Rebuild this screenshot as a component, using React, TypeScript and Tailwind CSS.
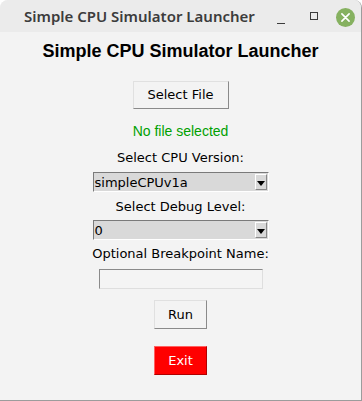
import React from "react";

const dv = { fontFamily: '"DejaVu Sans", sans-serif' } as const;
const ar = { fontFamily: '"Liberation Sans", Arial, sans-serif' } as const;

function Combo({ value }: { value: string }) {
  return (
    <div className="flex h-[20px] w-[176px] items-stretch border-t border-l border-[#7a7a7a] border-b border-b-[#ffffff] border-r border-r-[#ffffff] bg-[#d9d9d9]">
      <div className="flex flex-1 items-center pl-[1px] text-[13px] leading-none text-black" style={dv}>
        {value}
      </div>
      <div className="m-[1px] flex w-[12px] items-end justify-center border-t border-l border-t-white border-l-white border-b border-r border-b-[#888] border-r-[#888] bg-[#d9d9d9] pb-[3px]">
        <svg width="8" height="5" viewBox="0 0 8 5">
          <polygon points="0,0 8,0 4,5" fill="#000" />
        </svg>
      </div>
    </div>
  );
}

function Btn({ children, className = "" }: { children: React.ReactNode; className?: string }) {
  return (
    <div
      className={`flex items-center justify-center border border-t-[#e0e0e0] border-l-[#e0e0e0] border-b-[#8a8a8a] border-r-[#8a8a8a] text-[13px] text-[#000] ${className}`}
      style={dv}
    >
      {children}
    </div>
  );
}

export default function App() {
  return (
    <div className="h-[401px] w-[362px] bg-white">
      <div className="flex h-[401px] w-[362px] flex-col overflow-hidden rounded-t-[8px] border-r border-b border-[#9c9c9c] bg-[#f3f3f3]">
        <div className="relative flex h-[32px] shrink-0 items-center bg-[#ebebeb]">
          <div className="pl-[24px] text-[15px] font-semibold text-[#3c3c3c]" style={{ fontFamily: '"Noto Sans", sans-serif' }}>
            Simple CPU Simulator Launcher
          </div>
          <div className="absolute left-[277px] top-[23px] h-[1px] w-[8px] bg-[#3c3c3c]" />
          <div className="absolute left-[310px] top-[12px] h-[8px] w-[8px] border border-[#3c3c3c]" />
          <div className="absolute left-[336px] top-[8px] flex h-[19px] w-[19px] items-center justify-center rounded-full bg-[#86b160]">
            <svg width="9" height="9" viewBox="0 0 10 10">
              <path d="M1 1 L9 9 M9 1 L1 9" stroke="#fff" strokeWidth="1.8" strokeLinecap="round" />
            </svg>
          </div>
        </div>
        <div className="flex flex-col items-center">
          <div className="mt-[8px] h-[22px] text-[18px] font-bold leading-[22px] text-[#000]" style={ar}>
            Simple CPU Simulator Launcher
          </div>
          <Btn className="mt-[19px] h-[28px] w-[96px]">Select File</Btn>
          <div className="mt-[13px] h-[18px] text-[14px] leading-[18px] text-[#00a000]" style={ar}>
            No file selected
          </div>
          <div className="mt-[9px] h-[18px] text-[13px] leading-[18px] text-[#000]" style={dv}>
            Select CPU Version:
          </div>
          <div className="mt-[5px]">
            <Combo value="simpleCPUv1a" />
          </div>
          <div className="mt-[6px] h-[18px] text-[13px] leading-[18px] text-[#000]" style={dv}>
            Select Debug Level:
          </div>
          <div className="mt-[4px]">
            <Combo value="0" />
          </div>
          <div className="mt-[5px] h-[18px] text-[13px] leading-[18px] text-[#000]" style={dv}>
            Optional Breakpoint Name:
          </div>
          <div className="mt-[6px] h-[20px] w-[164px] border-t border-l border-[#8a8a8a] border-b border-b-[#dedede] border-r border-r-[#dedede] bg-[#f4f4f4]" />
          <Btn className="mt-[11px] h-[29px] w-[53px]">Run</Btn>
          <div
            className="mt-[17px] flex h-[29px] w-[53px] items-center justify-center border border-t-[#ff6060] border-l-[#ff6060] border-b-[#b00000] border-r-[#b00000] bg-[#ff0000] text-[13px] text-white"
            style={dv}
          >
            Exit
          </div>
        </div>
      </div>
    </div>
  );
}
